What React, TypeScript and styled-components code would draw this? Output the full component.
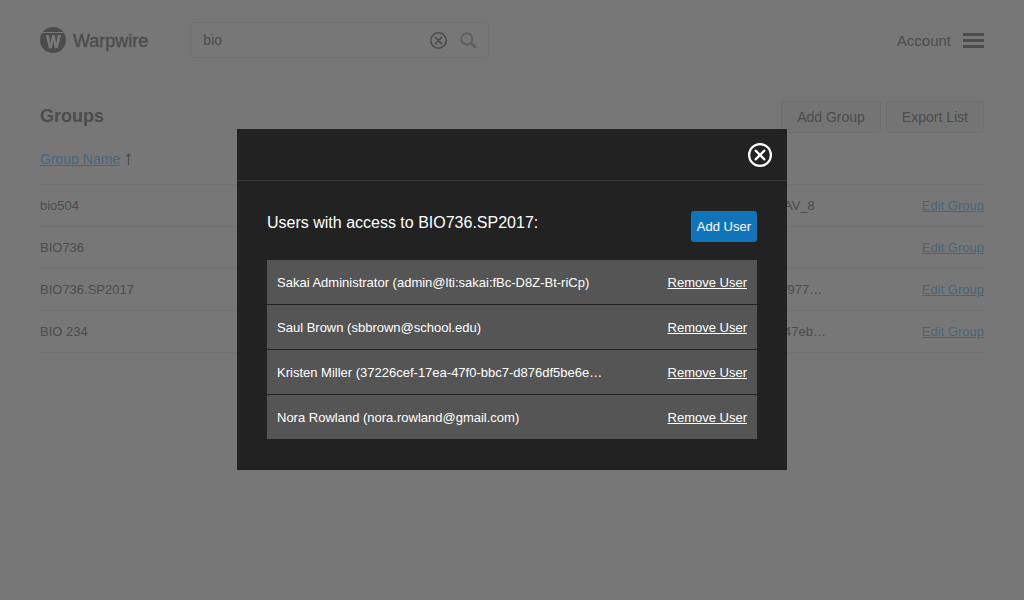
import React from "react";
import styled, { createGlobalStyle } from "styled-components";

const GlobalStyle = createGlobalStyle`
  *, *::before, *::after { box-sizing: border-box; }
  body {
    margin: 0;
    background: #777777;
    color: #4c4c4c;
    font-family: "Liberation Sans", Arial, sans-serif;
    font-size: 13px;
    line-height: 16px;
  }
  button, input { font-family: inherit; color: inherit; }
`;

const Page = styled.div`
  min-height: 100vh;
  padding: 22px 40px;
`;

const TopBar = styled.header`
  display: flex;
  align-items: center;
  gap: 42px;
`;

const Brand = styled.a`
  display: flex;
  align-items: center;
  gap: 7px;
  color: inherit;
  font-size: 18px;
  line-height: 24px;
  text-decoration: none;
  -webkit-text-stroke: 0.4px currentColor;
`;

const BarLabel = styled.span`
  padding-top: 2px;
`;

const SearchBox = styled.form`
  display: flex;
  align-items: center;
  gap: 13px;
  width: 299px;
  height: 36px;
  padding: 0 11px 0 12px;
  border: 1px solid #727272;
  border-radius: 3px;
`;

const SearchInput = styled.input`
  flex: 1;
  min-width: 0;
  padding: 0;
  border: 0;
  outline: 0;
  background: transparent;
  font-size: 14px;
`;

const IconButton = styled.button`
  display: flex;
  padding: 0;
  border: 0;
  background: transparent;
  cursor: pointer;
`;

const AccountButton = styled(IconButton)`
  align-items: center;
  gap: 12px;
  margin-left: auto;
  font-size: 15px;
  line-height: 22px;
`;

const TitleBar = styled.div`
  display: flex;
  align-items: flex-start;
  gap: 5px;
  margin-top: 43px;
`;

const PageTitle = styled.h1`
  flex: 1;
  margin: 0;
  font-size: 18px;
  line-height: 30px;
`;

const OutlineButton = styled.button`
  height: 32px;
  padding: 0 15px;
  border: 1px solid #6f6f6f;
  border-radius: 3px;
  background: #747474;
  font-size: 14px;
  cursor: pointer;
`;

const GroupTable = styled.table`
  width: 100%;
  margin-top: 10px;
  border-collapse: collapse;
  table-layout: fixed;
`;

const HeadCell = styled.th<{ $width?: number }>`
  width: ${({ $width }) => ($width ? `${$width}px` : "auto")};
  height: 41px;
  padding: 0 0 8px;
  border-bottom: 1px solid #727272;
  text-align: left;
  font-size: 14px;
  font-weight: 400;
`;

const SortArrow = styled.svg`
  margin-left: 4px;
  vertical-align: -1px;
`;

const Cell = styled.td<{ $align?: "left" | "right" }>`
  height: 42px;
  padding: 2px 0 0;
  border-bottom: 1px solid #727272;
  text-align: ${({ $align }) => $align ?? "left"};
  white-space: nowrap;
`;

const TableLink = styled.a`
  color: #48667b;
  text-decoration: underline;
`;

const Backdrop = styled.div`
  position: fixed;
  inset: 0;
  display: flex;
  align-items: center;
  justify-content: center;
  padding-bottom: 1px;
`;

const Dialog = styled.section`
  width: 550px;
  max-width: 100%;
  background: #222222;
  color: #ffffff;
`;

const DialogTop = styled.div`
  display: flex;
  align-items: center;
  justify-content: flex-end;
  height: 52px;
  padding: 0 15px;
  border-bottom: 1px solid #383838;
`;

const DialogBody = styled.div`
  padding: 30px;
`;

const DialogHeading = styled.div`
  display: flex;
  align-items: flex-start;
  justify-content: space-between;
  margin-bottom: 18px;
`;

const DialogTitle = styled.h2`
  margin: 0;
  font-size: 16px;
  font-weight: 400;
  line-height: 24px;
`;

const PrimaryButton = styled.button`
  height: 31px;
  padding: 0 6px;
  border: 0;
  border-radius: 3px;
  background: #1174ba;
  font-size: 13px;
  cursor: pointer;
`;

const UserList = styled.ul`
  margin: 0;
  padding: 0;
  list-style: none;
`;

const UserRow = styled.li`
  display: flex;
  align-items: center;
  justify-content: space-between;
  height: 45px;
  padding: 2px 10px 0;
  border-bottom: 1px solid #222222;
  background: #555555;
`;

const RemoveLink = styled.a`
  color: #ffffff;
  text-decoration: underline;
`;

const Logo = () => (
  <svg width="26" height="26" viewBox="0 0 26 26" aria-hidden="true">
    <circle cx="13" cy="13" r="13" fill="#4c4c4c" />
    <path d="M1 5.5H25" stroke="#777777" strokeWidth="1" />
    <path
      d="M5.8 8h3.1l1.7 8.4L12.1 8h2.5l1.6 8.4L17.8 8H21l-3.2 13.2h-3.1l-1.4-7.2-1.4 7.2H8.8z"
      fill="#777777"
    />
  </svg>
);

const CircleX = ({ size }: { size: number }) => (
  <svg
    width={size}
    height={size}
    viewBox="0 0 24 24"
    fill="none"
    stroke="currentColor"
    strokeWidth="2.2"
    strokeLinecap="round"
    aria-hidden="true"
  >
    <circle cx="12" cy="12" r="10.9" />
    <path d="M7.6 7.6l8.8 8.8M16.4 7.6l-8.8 8.8" />
  </svg>
);

const Magnifier = () => (
  <svg width="17" height="17" viewBox="0 0 17 17" fill="none" stroke="#606060" aria-hidden="true">
    <circle cx="6.8" cy="6.8" r="5.6" strokeWidth="2" />
    <path d="M11.3 11.3l4.4 4.4" strokeWidth="3" />
  </svg>
);

const MenuIcon = () => (
  <svg width="21" height="15" viewBox="0 0 21 15" fill="#4c4c4c" aria-hidden="true">
    <path d="M0 0h21v3H0zM0 6h21v3H0zM0 12h21v3H0z" />
  </svg>
);

const groups = [
  { name: "bio504", id: "AV_8" },
  { name: "BIO736", id: "" },
  { name: "BIO736.SP2017", id: "f977…" },
  { name: "BIO 234", id: "47eb…" },
];

const users = [
  "Sakai Administrator (admin@lti:sakai:fBc-D8Z-Bt-riCp)",
  "Saul Brown (sbbrown@school.edu)",
  "Kristen Miller (37226cef-17ea-47f0-bbc7-d876df5be6e…",
  "Nora Rowland (nora.rowland@gmail.com)",
];

export default function App() {
  return (
    <>
      <GlobalStyle />
      <Page>
        <TopBar>
          <Brand href="#home">
            <Logo />
            <BarLabel>Warpwire</BarLabel>
          </Brand>
          <SearchBox role="search" onSubmit={(e) => e.preventDefault()}>
            <SearchInput type="text" aria-label="Search" defaultValue="bio" />
            <IconButton type="reset" aria-label="Clear search">
              <CircleX size={17} />
            </IconButton>
            <IconButton type="submit" aria-label="Search">
              <Magnifier />
            </IconButton>
          </SearchBox>
          <AccountButton type="button">
            <BarLabel>Account</BarLabel>
            <MenuIcon />
          </AccountButton>
        </TopBar>

        <main>
          <TitleBar>
            <PageTitle>Groups</PageTitle>
            <OutlineButton type="button">Add Group</OutlineButton>
            <OutlineButton type="button">Export List</OutlineButton>
          </TitleBar>
          <GroupTable>
            <thead>
              <tr>
                <HeadCell scope="col" aria-sort="ascending">
                  <TableLink href="#sort">Group Name</TableLink>
                  <SortArrow width="9" height="12" viewBox="0 0 9 12" fill="none" stroke="#4c4c4c">
                    <path d="M4.5 12V1.5" strokeWidth="1.2" />
                    <path d="M4.5 0L7.6 4L4.5 2.8L1.4 4z" fill="#4c4c4c" stroke="none" />
                  </SortArrow>
                </HeadCell>
                <HeadCell as="td" $width={110} />
                <HeadCell as="td" $width={90} />
              </tr>
            </thead>
            <tbody>
              {groups.map((group) => (
                <tr key={group.name}>
                  <Cell>{group.name}</Cell>
                  <Cell>{group.id}</Cell>
                  <Cell $align="right">
                    <TableLink href="#edit">Edit Group</TableLink>
                  </Cell>
                </tr>
              ))}
            </tbody>
          </GroupTable>
        </main>
      </Page>

      <Backdrop>
        <Dialog role="dialog" aria-modal="true" aria-labelledby="dialog-title">
          <DialogTop>
            <IconButton type="button" aria-label="Close">
              <CircleX size={24} />
            </IconButton>
          </DialogTop>
          <DialogBody>
            <DialogHeading>
              <DialogTitle id="dialog-title">Users with access to BIO736.SP2017:</DialogTitle>
              <PrimaryButton type="button">Add User</PrimaryButton>
            </DialogHeading>
            <UserList>
              {users.map((user) => (
                <UserRow key={user}>
                  <span>{user}</span>
                  <RemoveLink href="#remove">Remove User</RemoveLink>
                </UserRow>
              ))}
            </UserList>
          </DialogBody>
        </Dialog>
      </Backdrop>
    </>
  );
}
